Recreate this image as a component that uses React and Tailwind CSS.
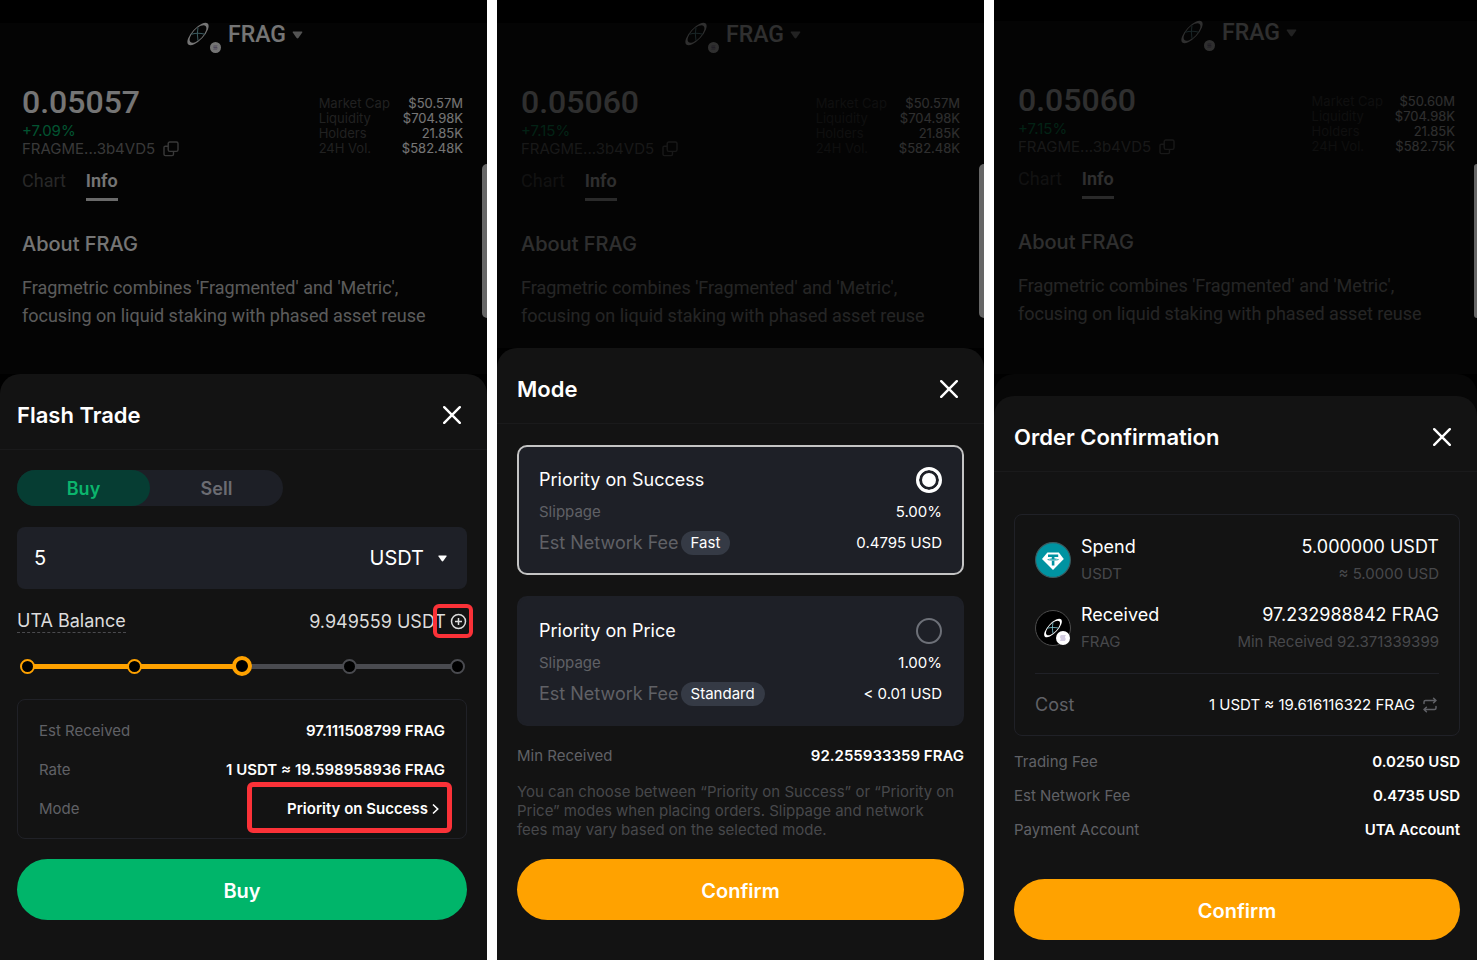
import { useState } from "react";

function CloseIcon() {
  return (
    <svg width="18" height="18" viewBox="0 0 18 18" fill="none">
      <path
        d="M1.2 1.2l15.6 15.6M16.8 1.2L1.2 16.8"
        stroke="currentColor"
        strokeWidth="2.4"
        strokeLinecap="round"
      />
    </svg>
  );
}

function Caret({ className }) {
  return (
    <svg className={className} viewBox="0 0 12 9" fill="currentColor">
      <path d="M1.4.5h9.2c.8 0 1.1.7.7 1.3L7 7.9c-.5.7-1.5.7-2 0L.7 1.8C.3 1.2.6.5 1.4.5z" />
    </svg>
  );
}

function CopyIcon() {
  return (
    <svg width="16" height="16" viewBox="0 0 16 16" fill="none" stroke="currentColor" strokeWidth="1.4">
      <rect x="5.2" y="1" width="9.8" height="9.4" rx="1.6" />
      <path d="M5 5.2H2.4C1.6 5.2 1 5.8 1 6.6v6.6c0 .8.6 1.4 1.4 1.4h6.7c.8 0 1.4-.6 1.4-1.4v-2.6" />
    </svg>
  );
}

function FragLogo({ className }) {
  return (
    <svg className={className} viewBox="0 0 26 26" fill="none">
      <g transform="rotate(-47 13 13)">
        <path
          fill="#fff"
          fillRule="evenodd"
          d="M-2.4 13a15.4 6.4 0 1 0 30.8 0a15.4 6.4 0 1 0-30.8 0zM1 13a12 5.4 0 1 0 24 0a12 5.4 0 1 0-24 0z"
        />
      </g>
      <path d="M5.6 13.2c5-1.2 10-1.2 14.8 0" stroke="#7fc4cf" strokeWidth="1.1" />
      <path d="M13 5.8c-1 5-1 9.6 0 14.4" stroke="#7fc4cf" strokeWidth="1.1" />
    </svg>
  );
}

function SolanaBadge({ className }) {
  return (
    <svg className={className} viewBox="0 0 14 14" fill="none">
      <circle cx="7" cy="7" r="7" fill="#fff" />
      <path d="M4.8 4.6h5l-.9 1h-5zM3.9 6.5h5l.9 1h-5zM4.8 8.4h5l-.9 1h-5z" fill="#a99bc4" />
    </svg>
  );
}

function TetherIcon() {
  return (
    <svg className="size-9" viewBox="0 0 36 36" fill="none">
      <circle cx="18" cy="18" r="17.4" fill="#0093a1" stroke="#3c5c60" strokeWidth="1.1" />
      <path d="M12.4 10.6h11.4l5 6.4L18 28 7 17z" fill="#fff" />
      <path
        d="M13 12.6h10.2v2.5h-3.8v1.3c2.6.1 4.4.6 4.4 1.2s-1.8 1-4.4 1.2v4.6h-2.6v-4.6c-2.6-.2-4.4-.6-4.4-1.2s1.8-1.1 4.4-1.2v-1.3H13z"
        fill="#0093a1"
      />
      <path d="M13.6 17.6c1.2.4 2.7.5 4.5.5s3.3-.1 4.5-.5" stroke="#fff" strokeWidth=".7" />
    </svg>
  );
}

function SwapIcon() {
  return (
    <svg
      width="14"
      height="16"
      viewBox="0 0 14 16"
      fill="none"
      stroke="currentColor"
      strokeWidth="1.5"
      strokeLinecap="round"
      strokeLinejoin="round"
    >
      <path d="M1 6.6V5c0-.9.6-1.5 1.5-1.5H13M10.6 1.2L13 3.5l-2.4 2.3" />
      <path d="M13 9.4V11c0 .9-.6 1.5-1.5 1.5H1M3.4 10.2L1 12.5l2.4 2.3" />
    </svg>
  );
}

/* Token page that sits dimmed behind each sheet */
function TokenPage({ className, price, change, stats }) {
  return (
    <section className="bg-[#040404] flex-1">
      <div className={className}>
        <header className="h-[46px] pl-1 flex items-center justify-center">
          <div className="relative w-[42px] h-6 -mt-6">
            <FragLogo className="size-6" />
            <SolanaBadge className="absolute left-6 top-5 size-[11px]" />
          </div>
          <button className="flex items-center gap-1.5 font-['Roboto',sans-serif] text-[23px] font-medium leading-6 -mt-[22px]">
            FRAG
            <Caret className="w-[11px] h-2 opacity-70" />
          </button>
        </header>

        <div className="flex justify-between pt-[13px]">
          <div>
            <p className="font-['Roboto',sans-serif] text-[32px] leading-10 font-medium">{price}</p>
            <p className="text-[15px] leading-[18px] text-[#00b368]">{change}</p>
            <p className="flex items-center gap-2 text-[15px] leading-[18px] text-[#7a7a7a]">
              FRAGME...3b4VD5
              <button aria-label="Copy address">
                <CopyIcon />
              </button>
            </p>
          </div>
          <table className="h-[60px] mt-3.5 text-[13px] leading-[15px]">
            <tbody>
              {stats.map(([label, value]) => (
                <tr key={label}>
                  <th className="p-0 pr-3 font-normal text-left text-[#444444]">{label}</th>
                  <td className="p-0 text-right">{value}</td>
                </tr>
              ))}
            </tbody>
          </table>
        </div>

        <nav className="flex gap-5 mt-1.5 h-[42px] font-['Roboto',sans-serif] text-[18px] leading-[34px]">
          <a href="#chart" className="text-[#555555]">
            Chart
          </a>
          <a href="#info" className="font-semibold border-b-3 border-white/90 h-[37px]">
            Info
          </a>
        </nav>

        <h2 className="text-[20px] leading-6 font-medium mt-[26px]">About FRAG</h2>
        <p className="font-['Roboto',sans-serif] text-[18px] leading-7 mt-[18px] text-[#c4c4c4]">
          Fragmetric combines &#39;Fragmented&#39; and &#39;Metric&#39;, focusing on liquid staking with
          phased asset reuse
        </p>
      </div>
    </section>
  );
}

function SheetHeader({ title }) {
  return (
    <div className="h-[76px] pt-1.5 pl-5 pr-[26px] flex items-center justify-between border-b border-[#1a1a1b]">
      <h1 className="text-[22px] leading-7 font-semibold">{title}</h1>
      <button aria-label="Close">
        <CloseIcon />
      </button>
    </div>
  );
}

function Row({ label, children }) {
  return (
    <div className="flex items-center justify-between text-[15px] leading-5">
      <span className="text-[#606166]">{label}</span>
      <span className="font-semibold">{children}</span>
    </div>
  );
}

function ScrollThumb({ className }) {
  return (
    <div className={`absolute right-0 top-41 h-[154px] rounded-l-md bg-[#666666] ${className}`} />
  );
}

function FlashTrade() {
  const [amount, setAmount] = useState("5");
  const [step, setStep] = useState(2);
  const stops = [0, 1, 2, 3, 4];

  return (
    <section className="bg-[#131313] rounded-t-[20px]">
      <div className="-ml-[3px]">
        <SheetHeader title="Flash Trade" />
      </div>

      <div className="pl-[17px] pr-5 pt-5 pb-10">
        <div className="w-[266px] h-9 grid grid-cols-2 rounded-full bg-[#1d1f26] text-[18px] font-semibold">
          <button className="rounded-full bg-[#063d33] text-[#0bb56d]">Buy</button>
          <button className="text-[#6b6c72]">Sell</button>
        </div>

        <div className="mt-[21px] h-[62px] rounded-lg bg-[#1e2027] pl-[17px] pr-5 flex items-center text-[20px]">
          <input
            aria-label="Amount"
            className="w-0 flex-1 bg-transparent outline-none"
            value={amount}
            onChange={(e) => setAmount(e.target.value)}
          />
          <select aria-label="Currency" className="appearance-none bg-transparent field-sizing-content mr-3.5">
            <option>USDT</option>
          </select>
          <Caret className="w-[9px] h-[7px]" />
        </div>

        <div className="mt-5 h-6 flex items-center justify-between text-[18px] text-[#dcdcdc]">
          <span className="h-6 leading-6 border-b border-dashed border-[#4a4a4e]">UTA Balance</span>
          <div className="relative flex items-center gap-1">
            <span>9.949559 USDT</span>
            <button aria-label="Add funds">
              <svg className="size-[17px]" viewBox="0 0 17 17" fill="none" stroke="currentColor" strokeWidth="1.5">
                <circle cx="8.5" cy="8.5" r="7" />
                <path d="M8.5 5v7M5 8.5h7" />
              </svg>
            </button>
            <div className="absolute -right-1.5 -top-1 w-10 h-[34px] rounded-md border-4 border-[#fb3238]" />
          </div>
        </div>

        {/* Balance slider */}

        <div className="relative mt-[23px] h-5 grid items-center">
          <div className="col-start-1 row-start-1 mx-2.5 h-[5px] bg-[#4a4b50]">
            <div className="h-full bg-[#ffa200]" style={{ width: `${step * 25}%` }} />
          </div>
          <div className="col-start-1 row-start-1 relative flex justify-between">
            {stops.map((stop) => (
              <div key={stop} className="size-5 flex items-center justify-center">
                <div
                  className={
                    stop === step
                      ? "size-5 rounded-full bg-black border-4 border-[#ffa200]"
                      : stop < step
                        ? "size-[15px] rounded-full bg-black border-2 border-[#ffa200]"
                        : "size-[15px] rounded-full bg-black border-2 border-[#4a4b50]"
                  }
                />
              </div>
            ))}
          </div>
          <input
            type="range"
            aria-label="Share of balance"
            min="0"
            max="4"
            value={step}
            onChange={(e) => setStep(Number(e.target.value))}
            className="col-start-1 row-start-1 relative w-full opacity-0"
          />
        </div>

        <div className="mt-[23px] h-[140px] rounded-lg border border-[#202127] px-[21px] pt-[21px] flex flex-col gap-[19px]">
          <Row label="Est Received">97.111508799 FRAG</Row>
          <Row label="Rate">1 USDT ≈ 19.598958936 FRAG</Row>
          <Row label="Mode">
            <button className="relative flex items-center gap-1 pr-1.5">
              Priority on Success
              <svg width="7" height="12" viewBox="0 0 7 12" fill="none" stroke="currentColor" strokeWidth="1.6">
                <path d="M1 1.5L5.7 6L1 10.5" />
              </svg>
              <span className="absolute -right-[7px] -top-[17px] w-[205px] h-[51px] rounded-md border-[5px] border-[#fb3238]" />
            </button>
          </Row>
        </div>

        <button className="mt-5 w-full h-[61px] pt-0.5 rounded-full bg-[#00b56a] text-[20px] font-semibold">
          Buy
        </button>
      </div>
    </section>
  );
}

function ModeOption({ id, title, slippage, speed, fee, checked, onSelect }) {
  return (
    <label
      htmlFor={id}
      className={
        checked
          ? "block h-[130px] rounded-[10px] border-2 border-[#c4c4c4] bg-[#1e2027] px-5 pt-[19px]"
          : "block h-[130px] rounded-[10px] border-2 border-[#1e2027] bg-[#1e2027] px-5 pt-[19px]"
      }
    >
      <span className="flex items-center justify-between text-[18px] leading-7">
        {title}
        <input
          id={id}
          type="radio"
          name="mode"
          checked={checked}
          onChange={onSelect}
          className="appearance-none size-[26px] rounded-full border-2 border-[#6d7078] checked:border-[3px] checked:border-white checked:bg-white checked:shadow-[inset_0_0_0_3px_#1e2027]"
        />
      </span>
      <span className="mt-1.5 flex items-center justify-between text-[15px] leading-6">
        <span className="text-[#606166]">Slippage</span>
        {slippage}
      </span>
      <span className="mt-[7px] flex items-center justify-between text-[15px] leading-6">
        <span className="flex items-center text-[18px] text-[#606166]">
          Est Network Fee
          <span className="ml-0.5 rounded-full bg-[#353a45] px-2.5 text-[15px] leading-6 text-white">{speed}</span>
        </span>
        {fee}
      </span>
    </label>
  );
}

function Mode() {
  const [mode, setMode] = useState("success");

  return (
    <section className="bg-[#131313] rounded-t-[20px]">
      <SheetHeader title="Mode" />

      <div className="px-5 pt-[21px] pb-10">
        <div className="flex flex-col gap-[21px]">
          <ModeOption
            id="mode-success"
            title="Priority on Success"
            slippage="5.00%"
            speed="Fast"
            fee="0.4795 USD"
            checked={mode === "success"}
            onSelect={() => setMode("success")}
          />
          <ModeOption
            id="mode-price"
            title="Priority on Price"
            slippage="1.00%"
            speed="Standard"
            fee="< 0.01 USD"
            checked={mode === "price"}
            onSelect={() => setMode("price")}
          />
        </div>

        <div className="mt-5">
          <Row label="Min Received">92.255933359 FRAG</Row>
        </div>
        <p className="mt-4 pr-2 text-[15px] leading-[19px] text-[#47484b]">
          You can choose between “Priority on Success” or “Priority on Price” modes when placing orders.
          Slippage and network fees may vary based on the selected mode.
        </p>

        <button className="mt-5 w-full h-[61px] pt-0.5 rounded-full bg-[#ffa200] text-[20px] font-semibold">
          Confirm
        </button>
      </div>
    </section>
  );
}

function TokenAmount({ icon, label, token, amount, note }) {
  return (
    <div className="flex items-center gap-2.5">
      {icon}
      <div className="flex-1">
        <div className="flex justify-between text-[18px] leading-7">
          <span>{label}</span>
          <span>{amount}</span>
        </div>
        <div className="flex justify-between text-[15px] leading-[26px] text-[#47484b]">
          <span>{token}</span>
          <span>{note}</span>
        </div>
      </div>
    </div>
  );
}

function OrderConfirmation() {
  return (
    <section className="bg-[#070707] rounded-t-[20px] pt-[22px]">
      <div className="bg-[#131313] rounded-t-[20px]">
        <SheetHeader title="Order Confirmation" />

        <div className="pl-5 pr-[17px] pt-[42px] pb-5">
          <div className="h-[222px] rounded-lg border border-[#202127] px-5 pt-[18px]">
            <div className="flex flex-col gap-3.5">
              <TokenAmount
                icon={<TetherIcon />}
                label="Spend"
                token="USDT"
                amount="5.000000 USDT"
                note="≈ 5.0000 USD"
              />
              <TokenAmount
                icon={
                  <div className="relative size-9 rounded-full bg-black border border-[#4c4c4c] flex items-center justify-center">
                    <FragLogo className="size-5" />
                    <SolanaBadge className="absolute right-0 bottom-0 size-3.5" />
                  </div>
                }
                label="Received"
                token="FRAG"
                amount="97.232988842 FRAG"
                note="Min Received 92.371339399"
              />
            </div>
            <div className="mt-[18px] border-t border-[#202127] pt-[17px] flex items-center justify-between text-[15px] leading-7">
              <span className="text-[18px] text-[#606166]">Cost</span>
              <span className="flex items-center gap-2 pr-0.5">
                1 USDT ≈ 19.616116322 FRAG
                <button aria-label="Swap rate" className="text-[#606166]">
                  <SwapIcon />
                </button>
              </span>
            </div>
          </div>

          <div className="mt-4 flex flex-col gap-3.5">
            <Row label="Trading Fee">0.0250 USD</Row>
            <Row label="Est Network Fee">0.4735 USD</Row>
            <Row label="Payment Account">UTA Account</Row>
          </div>

          <button className="mt-[39px] w-full h-[61px] pt-0.5 rounded-full bg-[#ffa200] text-[20px] font-semibold">
            Confirm
          </button>
        </div>
      </div>
    </section>
  );
}

export default function App() {
  return (
    <main className="min-h-screen grid grid-cols-[minmax(0,487fr)_minmax(0,487fr)_minmax(0,483fr)] gap-2.5 bg-white font-['Inter',sans-serif] text-white">
      <div className="relative flex flex-col bg-black pt-[23px]">
        <TokenPage
          className="pl-[22px] pr-6 opacity-45"
          price="0.05057"
          change="+7.09%"
          stats={[
            ["Market Cap", "$50.57M"],
            ["Liquidity", "$704.98K"],
            ["Holders", "21.85K"],
            ["24H Vol.", "$582.48K"],
          ]}
        />
        <FlashTrade />
        <ScrollThumb className="w-[5px]" />
      </div>

      <div className="relative flex flex-col bg-black pt-[23px]">
        <TokenPage
          className="px-6 opacity-17"
          price="0.05060"
          change="+7.15%"
          stats={[
            ["Market Cap", "$50.57M"],
            ["Liquidity", "$704.98K"],
            ["Holders", "21.85K"],
            ["24H Vol.", "$582.48K"],
          ]}
        />
        <Mode />
        <ScrollThumb className="w-[5px]" />
      </div>

      <div className="relative flex flex-col bg-black pt-[21px]">
        <TokenPage
          className="pl-6 pr-[22px] opacity-17"
          price="0.05060"
          change="+7.15%"
          stats={[
            ["Market Cap", "$50.60M"],
            ["Liquidity", "$704.98K"],
            ["Holders", "21.85K"],
            ["24H Vol.", "$582.75K"],
          ]}
        />
        <OrderConfirmation />
        <ScrollThumb className="w-[3px]" />
      </div>
    </main>
  );
}
